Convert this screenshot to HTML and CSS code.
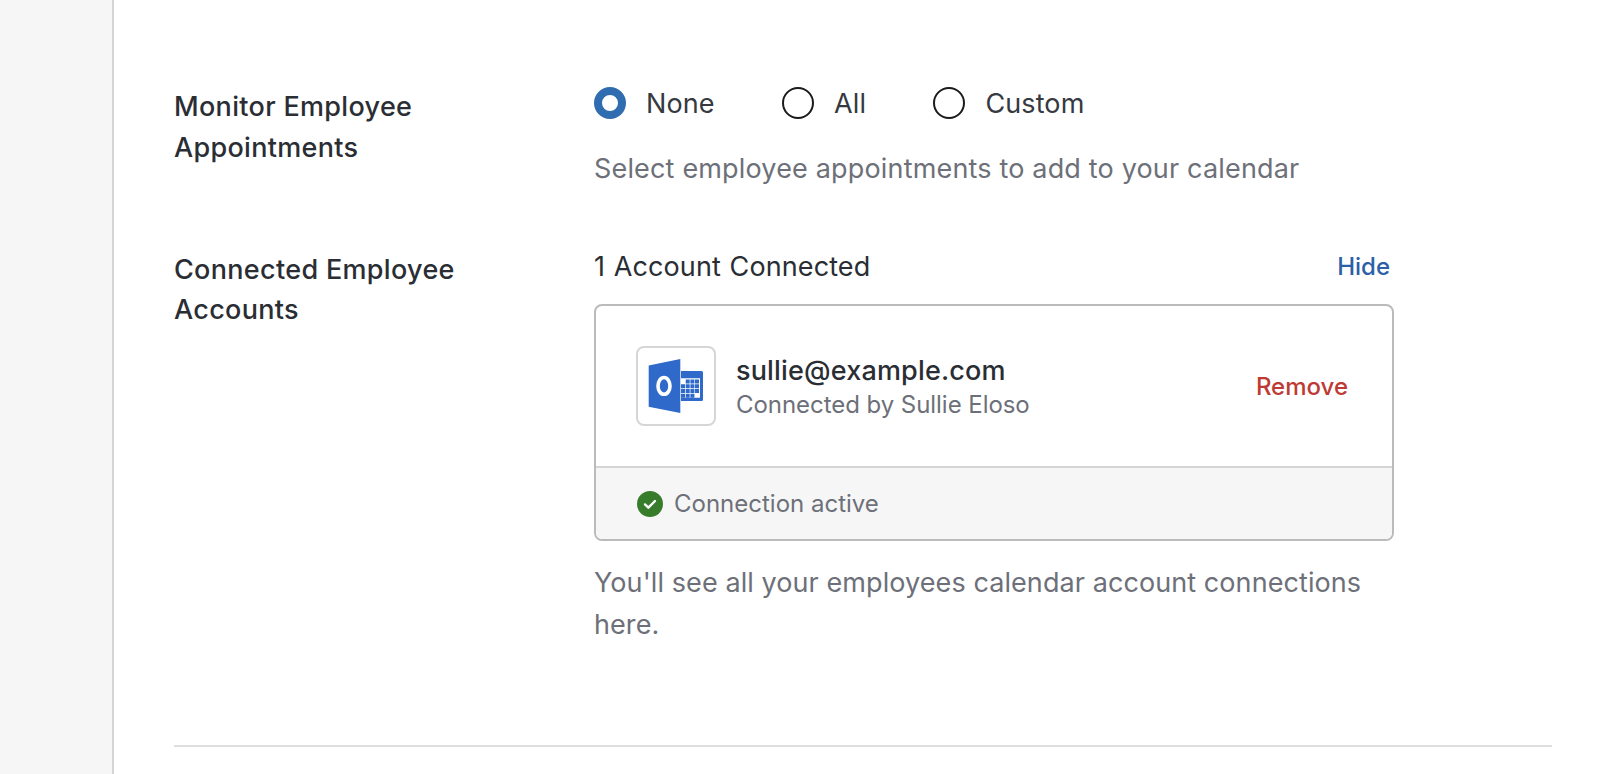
FILE: index.html
```html
<!DOCTYPE html>
<html lang="en">
<head>
    <meta charset="UTF-8">
    <meta name="viewport" content="width=device-width, initial-scale=1.0">
    <title>Calendar Settings</title>
    <link rel="stylesheet" href="styles.css">
</head>
<body>
    <aside class="sidebar"></aside>

    <main class="content">
        <section class="row monitor-row">
            <h2 class="row-label">Monitor Employee Appointments</h2>
            <div class="row-field">
                <div class="radio-group">
                    <label class="radio"><input type="radio" name="monitor" checked><span>None</span></label>
                    <label class="radio"><input type="radio" name="monitor"><span>All</span></label>
                    <label class="radio"><input type="radio" name="monitor"><span>Custom</span></label>
                </div>
                <p class="hint select-hint">Select employee appointments to add to your calendar</p>
            </div>
        </section>

        <section class="row accounts-row">
            <h2 class="row-label">Connected Employee Accounts</h2>
            <div class="row-field">
                <div class="accounts-header">
                    <span class="accounts-count">1 Account Connected</span>
                    <a class="hide-link" href="#">Hide</a>
                </div>

                <div class="card">
                    <div class="card-body">
                        <div class="logo">
                            <svg width="76" height="76" viewBox="0 0 76 76">
                                <path fill="#2f69c9" d="M10.7 17.5 42.3 11v54l-31.6-6.3z"/>
                                <ellipse cx="26" cy="37.9" rx="6" ry="8.4" fill="none" stroke="#fff" stroke-width="3.6"/>
                                <path fill="#2f69c9" d="M43 23h20.5a1.5 1.5 0 0 1 1.5 1.5v27a1.5 1.5 0 0 1-1.5 1.5H43z"/>
                                <path fill="#fff" d="M43 30.3h19v19.5H43z"/>
                                <path fill="#2f69c9" d="M47.7 31.5h4v4h-4zM52.4 31.5h4v4h-4zM57 31.5h4v4h-4zM43 36.3h4v4h-4zM47.7 36.3h4v4h-4zM52.4 36.3h4v4h-4zM57 36.3h4v4h-4zM43 41h4v4h-4zM47.7 41h4v4h-4zM52.4 41h4v4h-4zM57 41h4v4h-4zM43 45.7h4v4h-4zM47.7 45.7h4v4h-4zM52.4 45.7h4v4h-4z"/>
                            </svg>
                        </div>
                        <div class="account">
                            <div class="email">sullie@example.com</div>
                            <div class="connected-by">Connected by Sullie Eloso</div>
                        </div>
                        <a class="remove-link" href="#">Remove</a>
                    </div>
                    <div class="card-footer">
                        <svg width="26" height="26" viewBox="0 0 26 26">
                            <circle cx="13" cy="13" r="13" fill="#367c2b"/>
                            <path d="M8 13.4 11.4 16.7 18 10" fill="none" stroke="#fff" stroke-width="2.4" stroke-linecap="round" stroke-linejoin="round"/>
                        </svg>
                        <span class="status">Connection active</span>
                    </div>
                </div>

                <p class="hint accounts-hint">You'll see all your employees calendar account connections here.</p>
            </div>
        </section>

        <hr class="divider">
    </main>
</body>
</html>
```
FILE: styles.css
```css
* {
    box-sizing: border-box;
}

body {
    margin: 0;
    display: flex;
    height: 100vh;
    overflow: hidden;
    background-color: #fff;
    color: #2a2e34;
    font-family: Inter, "Liberation Sans", sans-serif;
    font-size: 27px;
    line-height: 42px;
}

a {
    text-decoration: none;
}

.sidebar {
    width: 114px;
    flex-shrink: 0;
    background-color: #f6f6f6;
    border-right: 2px solid #d5d5d5;
}

.content {
    flex: 1;
    padding: 82px 48px 0 60px;
}

/* -- Rows -- */

.row {
    display: flex;
}

.monitor-row {
    height: 164px;
}

.accounts-row {
    height: 499px;
}

.row-label {
    width: 320px;
    margin: 5px 100px 0 0;
    font-size: 27px;
    font-weight: 500;
    letter-spacing: 0.32px;
    line-height: 40.5px;
}

.accounts-row .row-label {
    margin-top: 4px;
    line-height: 40px;
}

.row-field {
    width: 800px;
}

.hint {
    margin: 0;
    color: #6d7079;
}

.select-hint {
    margin-top: 25px;
    letter-spacing: 0.17px;
}

.accounts-hint {
    margin-top: 21px;
    letter-spacing: 0.08px;
}

/* -- Radios -- */

.radio-group {
    display: flex;
    gap: 67.4px;
    padding-top: 1px;
    color: #36393f;
}

.radio {
    display: flex;
    align-items: center;
    gap: 20px;
}

.radio input {
    appearance: none;
    width: 32px;
    height: 32px;
    margin: 0;
    border: 2px solid #1b1b1b;
    border-radius: 50%;
}

.radio input:checked {
    border: 8px solid #2f6cb0;
}

.radio span {
    margin-bottom: -2px;
    letter-spacing: 0.1px;
}

/* -- Connected account card -- */

.accounts-header {
    display: flex;
    justify-content: space-between;
    padding-right: 4px;
    margin-bottom: 16px;
}

.accounts-count {
    letter-spacing: 0.1px;
    word-spacing: 1px;
}

.hide-link {
    color: #2b5fa8;
    font-size: 24px;
    font-weight: 500;
}

.card {
    border: 2px solid #bbb;
    border-radius: 8px;
    overflow: hidden;
}

.card-body {
    display: flex;
    align-items: center;
    height: 160px;
    padding: 0 44px 0 40px;
}

.logo {
    width: 80px;
    height: 80px;
    border: 2px solid #d6d6d6;
    border-radius: 8px;
}

.logo svg {
    display: block;
}

.account {
    flex: 1;
    margin-left: 20px;
    padding-top: 2px;
}

.email {
    font-weight: 500;
    letter-spacing: 0.17px;
    line-height: 36px;
}

.connected-by {
    color: #6d7079;
    font-size: 24px;
    letter-spacing: -0.05px;
    line-height: 32px;
}

.remove-link {
    padding-top: 2px;
    color: #be3a34;
    font-size: 24px;
    font-weight: 500;
}

.card-footer {
    display: flex;
    align-items: center;
    gap: 11px;
    height: 73px;
    padding-left: 41px;
    background-color: #f6f6f6;
    border-top: 2px solid #d5d5d5;
}

.status {
    color: #6d7079;
    font-size: 24px;
}

.divider {
    height: 2px;
    margin: 0;
    border: 0;
    background-color: #dedede;
}
```
